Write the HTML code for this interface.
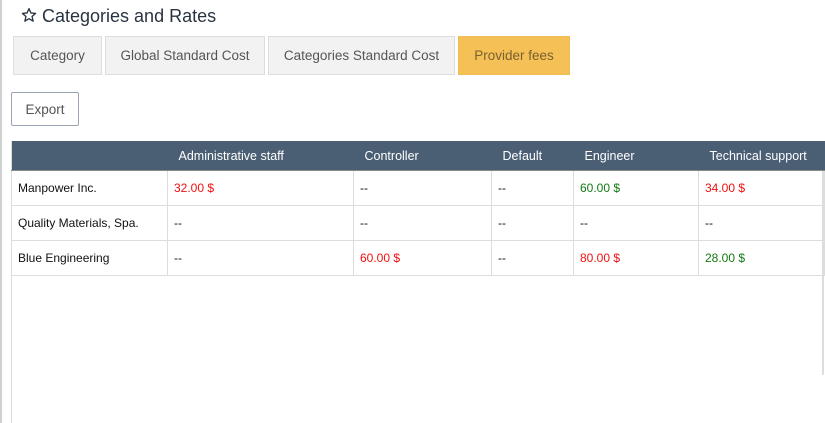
<!DOCTYPE html>
<html><head><style>
body{margin:0;width:825px;height:423px;background:#fff;font-family:"Liberation Sans",sans-serif;position:relative;overflow:hidden;color:#333}
.lb{position:absolute;left:0;top:0;width:2px;height:423px;background:#d0d0d0}
.title{position:absolute;left:21px;top:6px;font-size:18px;color:#2a3340}
.tab{position:absolute;top:36px;height:39px;box-sizing:border-box;border:1px solid #ddd;background:#f2f2f2;font-size:13.5px;color:#555;display:flex;align-items:center;justify-content:center}
.btn{position:absolute;left:11px;top:92px;width:68px;height:34px;box-sizing:border-box;border:1px solid #9aa5b4;border-radius:2px;font-size:13.5px;color:#555;display:flex;align-items:center;justify-content:center}
.box{position:absolute;left:11px;top:141px;width:813px;height:234px;border-right:2px solid #ddd;box-sizing:border-box}
.lline{position:absolute;left:11px;top:141px;width:1px;height:282px;background:#ddd}
table{position:absolute;left:11px;top:141px;border-collapse:collapse;font-size:12px;table-layout:fixed}
th{background:#4a5e74;color:#fff;font-weight:normal;text-align:left;padding:0 0 0 11px;height:29px;font-size:12.5px;border-bottom:1px solid #888}
td{border:1px solid #ddd;height:34px;padding:0 0 0 6px;color:#111}
.r{color:#f01010}.g{color:#127a12}
</style></head><body>
<div class="lb"></div>
<div class="title"><svg width="16" height="16" viewBox="0 0 24 24" style="vertical-align:-1px"><path d="M12 2.5l2.9 6.4 7 .7-5.3 4.7 1.6 6.9L12 17.6l-6.2 3.6 1.6-6.9-5.3-4.7 7-.7z" fill="none" stroke="#2a3340" stroke-width="2" stroke-linejoin="round"/></svg> Categories and Rates</div>
<div class="tab" style="left:13px;width:89px">Category</div>
<div class="tab" style="left:105px;width:160px">Global Standard Cost</div>
<div class="tab" style="left:268px;width:187px">Categories Standard Cost</div>
<div class="tab" style="left:458px;width:112px;background:#f5c156;border-color:#f0bd55;color:#7a6030">Provider fees</div>
<div class="btn">Export</div>
<div class="box"></div><div class="lline"></div>
<table>
<colgroup><col style="width:156px"><col style="width:186px"><col style="width:138px"><col style="width:82px"><col style="width:125px"><col style="width:126px"></colgroup>
<tr><th></th><th>Administrative staff</th><th>Controller</th><th>Default</th><th>Engineer</th><th>Technical support</th></tr>
<tr><td>Manpower Inc.</td><td class="r">32.00 $</td><td>--</td><td>--</td><td class="g">60.00 $</td><td class="r">34.00 $</td></tr>
<tr><td>Quality Materials, Spa.</td><td>--</td><td>--</td><td>--</td><td>--</td><td>--</td></tr>
<tr><td>Blue Engineering</td><td>--</td><td class="r">60.00 $</td><td>--</td><td class="r">80.00 $</td><td class="g">28.00 $</td></tr>
</table>
</body></html>
